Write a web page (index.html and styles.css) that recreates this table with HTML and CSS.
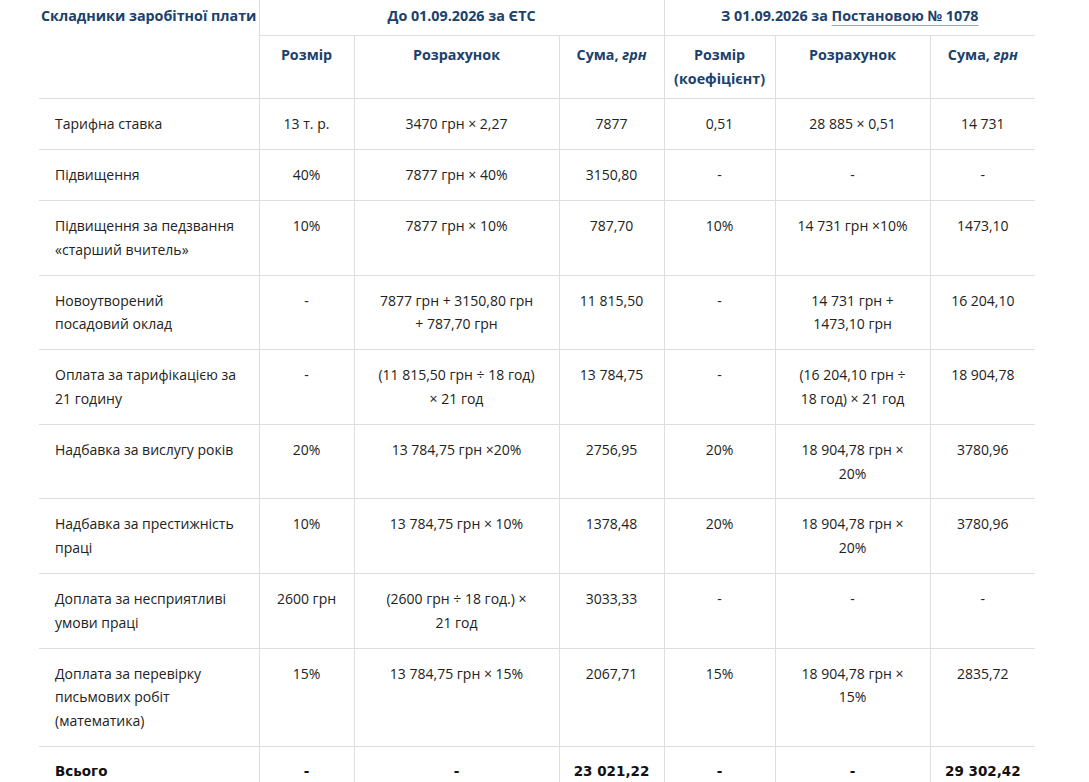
FILE: index.html
```html
<!DOCTYPE html>
<html lang="uk">
<head>
<meta charset="utf-8">
<title>Складники заробітної плати</title>
<link rel="stylesheet" href="styles.css">
</head>
<body>
<div class="page">
<table class="salary">
  <colgroup>
    <col class="c-name">
    <col class="c-size">
    <col class="c-calc">
    <col class="c-sum">
    <col class="c-size2">
    <col class="c-calc2">
    <col class="c-sum2">
  </colgroup>
  <thead>
    <tr>
      <th class="th-name" rowspan="2">Складники заробітної плати</th>
      <th colspan="3">До 01.09.2026 за ЄТС</th>
      <th colspan="3">З 01.09.2026 за <a class="doc-link" href="#">Постановою № 1078</a></th>
    </tr>
    <tr>
      <th>Розмір</th>
      <th>Розрахунок</th>
      <th>Сума, <em>грн</em></th>
      <th>Розмір<br>(коефіцієнт)</th>
      <th>Розрахунок</th>
      <th>Сума, <em>грн</em></th>
    </tr>
  </thead>
  <tbody>
    <tr>
      <td>Тарифна ставка</td>
      <td>13 т. р.</td>
      <td>3470 грн × 2,27</td>
      <td>7877</td>
      <td>0,51</td>
      <td>28 885 × 0,51</td>
      <td>14 731</td>
    </tr>
    <tr>
      <td>Підвищення</td>
      <td>40%</td>
      <td>7877 грн × 40%</td>
      <td>3150,80</td>
      <td>-</td>
      <td>-</td>
      <td>-</td>
    </tr>
    <tr>
      <td>Підвищення за педзвання<br>«старший вчитель»</td>
      <td>10%</td>
      <td>7877 грн × 10%</td>
      <td>787,70</td>
      <td>10%</td>
      <td>14 731 грн ×10%</td>
      <td>1473,10</td>
    </tr>
    <tr>
      <td>Новоутворений<br>посадовий оклад</td>
      <td>-</td>
      <td>7877 грн + 3150,80 грн<br>+ 787,70 грн</td>
      <td>11 815,50</td>
      <td>-</td>
      <td>14 731 грн +<br>1473,10 грн</td>
      <td>16 204,10</td>
    </tr>
    <tr>
      <td>Оплата за тарифікацією за<br>21 годину</td>
      <td>-</td>
      <td>(11 815,50 грн ÷ 18 год)<br>× 21 год</td>
      <td>13 784,75</td>
      <td>-</td>
      <td>(16 204,10 грн ÷<br>18 год) × 21 год</td>
      <td>18 904,78</td>
    </tr>
    <tr>
      <td>Надбавка за вислугу років</td>
      <td>20%</td>
      <td>13 784,75 грн ×20%</td>
      <td>2756,95</td>
      <td>20%</td>
      <td>18 904,78 грн ×<br>20%</td>
      <td>3780,96</td>
    </tr>
    <tr>
      <td>Надбавка за престижність<br>праці</td>
      <td>10%</td>
      <td>13 784,75 грн × 10%</td>
      <td>1378,48</td>
      <td>20%</td>
      <td>18 904,78 грн ×<br>20%</td>
      <td>3780,96</td>
    </tr>
    <tr>
      <td>Доплата за несприятливі<br>умови праці</td>
      <td>2600 грн</td>
      <td>(2600 грн ÷ 18 год.) ×<br>21 год</td>
      <td>3033,33</td>
      <td>-</td>
      <td>-</td>
      <td>-</td>
    </tr>
    <tr>
      <td>Доплата за перевірку<br>письмових робіт<br>(математика)</td>
      <td>15%</td>
      <td>13 784,75 грн × 15%</td>
      <td>2067,71</td>
      <td>15%</td>
      <td>18 904,78 грн ×<br>15%</td>
      <td>2835,72</td>
    </tr>
    <tr class="total">
      <td>Всього</td>
      <td>-</td>
      <td>-</td>
      <td>23 021,22</td>
      <td>-</td>
      <td>-</td>
      <td>29 302,42</td>
    </tr>
  </tbody>
</table>
</div>
</body>
</html>
```
FILE: styles.css
```css
html, body {
  margin: 0;
  padding: 0;
  background: #fff;
}

.page {
  padding: 0 0 0 39px;
  margin-top: -4px;
}

.salary {
  width: 996px;
  table-layout: fixed;
  border-collapse: collapse;
  font-family: "Open Sans", "Noto Sans", sans-serif;
  font-size: 14px;
  line-height: 23.8px;
  color: #222;
}

.c-name { width: 220px; }
.c-size { width: 95px; }
.c-calc { width: 205px; }
.c-sum { width: 105px; }
.c-size2 { width: 111px; }
.c-calc2 { width: 155px; }
.c-sum2 { width: 105px; }

.salary th {
  font-size: 14.3px;
  font-weight: 700;
  color: #1b416c;
  text-align: center;
  vertical-align: top;
  padding: 7.5px 4px;
  border-left: 1px solid #dedede;
  border-bottom: 1px solid #dedede;
}

.salary th em {
  font-style: italic;
}

.salary th.th-name {
  text-align: left;
  padding-left: 2px;
  padding-right: 0;
  white-space: nowrap;
  border-left: none;
}

.doc-link {
  color: #1b416c;
  text-decoration: underline;
  text-decoration-color: #93a8c2;
  text-underline-offset: 4px;
}

.salary td {
  vertical-align: top;
  text-align: center;
  padding: 13px 6px;
  border-left: 1px solid #dedede;
  border-bottom: 1px solid #dedede;
}

.salary td:first-child {
  text-align: left;
  padding-left: 16px;
  border-left: none;
}

.salary tr.total td {
  font-family: "DejaVu Sans", "Open Sans", sans-serif;
  font-size: 13.5px;
  font-weight: 700;
  color: #111;
}
```
